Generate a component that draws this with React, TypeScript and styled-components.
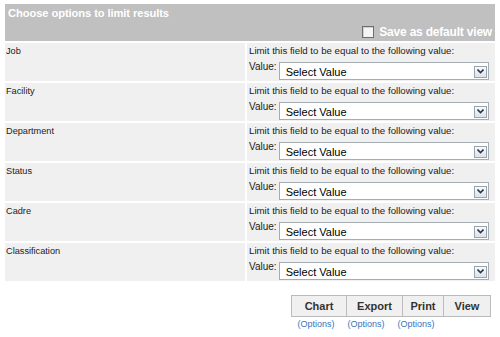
import styled, { createGlobalStyle } from "styled-components";

const GlobalStyle = createGlobalStyle`
  body {
    margin: 0;
    background: #ffffff;
    font-family: "Liberation Sans", Arial, sans-serif;
  }
`;

const Page = styled.div`
  padding: 4px 5px 0 5px;
  width: 490px;
`;

const Header = styled.div`
  background: #c0c0c0;
  height: 37px;
  display: flex;
  flex-direction: column;
  justify-content: space-between;
  padding: 3px 3px 2px 3px;
  box-sizing: border-box;
  color: #ffffff;
  font-weight: bold;
`;

const Title = styled.div`
  font-size: 11.2px;
  letter-spacing: -0.1px;
`;

const SaveDefault = styled.label`
  align-self: flex-end;
  display: flex;
  align-items: center;
  gap: 5px;
  font-size: 12px;
  letter-spacing: -0.2px;
`;

const Box = styled.span`
  width: 12px;
  height: 12px;
  box-sizing: border-box;
  background: #f4f4f4;
  border: 1px solid #6e6e6e;
  box-shadow: inset 1px 1px 0 #d0d0d0;
`;

const Grid = styled.div`
  display: grid;
  grid-template-columns: 240px 248px;
  grid-auto-rows: 38px;
  gap: 2px;
  margin-top: 2px;
`;

const LabelCell = styled.div`
  background: #f0f0f0;
  font-size: 9.2px;
  color: #222;
  padding: 3px 1px;
`;

const FieldCell = styled.div`
  background: #f0f0f0;
  font-size: 9.7px;
  color: #222;
  padding: 2px 2px 0 2px;
  display: flex;
  flex-direction: column;
  gap: 4px;
`;

const ValueRow = styled.div`
  display: flex;
  align-items: flex-start;
  gap: 2px;
`;

const ValueLabel = styled.span`
  padding-top: 1px;
  font-size: 10px;
`;

const Select = styled.div`
  width: 210px;
  height: 18px;
  margin-top: 2px;
  box-sizing: border-box;
  background: #ffffff;
  border: 1px solid #a5acb2;
  display: flex;
  align-items: center;
  justify-content: space-between;
  padding: 1px 1px 0 6px;
  font-size: 11px;
  color: #000;
`;

const Arrow = styled.span`
  width: 13px;
  height: 12px;
  box-sizing: border-box;
  border: 1px solid #9aa4ae;
  background: linear-gradient(#fafafa, #dde3ea);
  display: flex;
  align-items: center;
  justify-content: center;
`;

const Actions = styled.div`
  display: flex;
  justify-content: flex-end;
  margin-top: 14px;
  padding-right: 4px;
`;

const ButtonTable = styled.div`
  display: flex;
  flex-direction: column;
`;

const Buttons = styled.div`
  display: flex;
  border: 1px solid #bbbbbb;
  height: 22px;
  box-sizing: border-box;
`;

const Btn = styled.div<{ $w: number }>`
  width: ${(p) => p.$w}px;
  display: flex;
  align-items: center;
  justify-content: center;
  background: #f0f0f0;
  font-size: 11px;
  font-weight: bold;
  color: #333;
  border-left: 1px solid #bbbbbb;
  box-sizing: border-box;
  &:first-child {
    border-left: none;
  }
`;

const OptionsRow = styled.div`
  display: flex;
  margin-top: 2px;
`;

const OptionLink = styled.a<{ $w: number }>`
  width: ${(p) => p.$w}px;
  text-align: center;
  font-size: 9px;
  color: #3a74b8;
  text-decoration: none;
`;

const fields = ["Job", "Facility", "Department", "Status", "Cadre", "Classification"];

export default function App() {
  return (
    <>
      <GlobalStyle />
      <Page>
        <Header>
          <Title>Choose options to limit results</Title>
          <SaveDefault>
            <Box />
            Save as default view
          </SaveDefault>
        </Header>
        <Grid>
          {fields.map((f) => (
            <Row key={f} name={f} />
          ))}
        </Grid>
        <Actions>
          <ButtonTable>
            <Buttons>
              <Btn $w={54}>Chart</Btn>
              <Btn $w={56}>Export</Btn>
              <Btn $w={41}>Print</Btn>
              <Btn $w={47}>View</Btn>
            </Buttons>
            <OptionsRow>
              <OptionLink $w={50} href="#">(Options)</OptionLink>
              <OptionLink $w={50} href="#">(Options)</OptionLink>
              <OptionLink $w={50} href="#">(Options)</OptionLink>
            </OptionsRow>
          </ButtonTable>
        </Actions>
      </Page>
    </>
  );
}

function Row({ name }: { name: string }) {
  return (
    <>
      <LabelCell>{name}</LabelCell>
      <FieldCell>
        <div>Limit this field to be equal to the following value:</div>
        <ValueRow>
          <ValueLabel>Value:</ValueLabel>
          <Select>
            Select Value
            <Arrow>
              <svg width="7" height="5" viewBox="0 0 7 5">
                <path d="M0.5 0.5 L3.5 3.5 L6.5 0.5" fill="none" stroke="#2b3a4a" strokeWidth="1.6" />
              </svg>
            </Arrow>
          </Select>
        </ValueRow>
      </FieldCell>
    </>
  );
}
